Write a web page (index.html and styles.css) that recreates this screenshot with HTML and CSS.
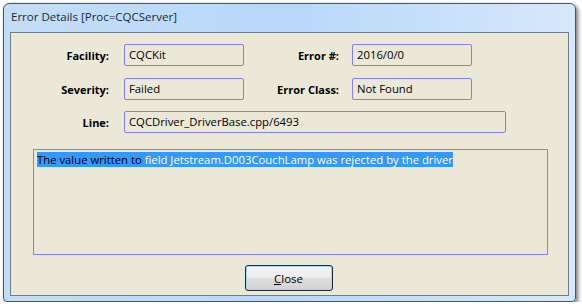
FILE: index.html
```html
<!DOCTYPE html>
<html>
<head>
<meta charset="utf-8">
<link rel="stylesheet" href="styles.css">
</head>
<body>
<div class="window">
  <div class="titlebar">Error Details [Proc=CQCServer]</div>
  <div class="client">
    <div class="row">
      <div class="label l1">Facility:</div>
      <div class="field f1">CQCKit</div>
      <div class="label l2">Error #:</div>
      <div class="field f1">2016/0/0</div>
    </div>
    <div class="row">
      <div class="label l1">Severity:</div>
      <div class="field f1">Failed</div>
      <div class="label l2">Error Class:</div>
      <div class="field f1">Not Found</div>
    </div>
    <div class="row">
      <div class="label l1">Line:</div>
      <div class="field fline">CQCDriver_DriverBase.cpp/6493</div>
    </div>
    <div class="message"><span class="sel"><span class="dark">The value written to </span>field Jetstream.D003CouchLamp was rejected by the driver</span></div>
    <div class="buttons">
      <button class="btn"><span class="u">C</span>lose</button>
    </div>
  </div>
</div>
</body>
</html>
```

FILE: styles.css
```css
html, body {
  margin: 0;
  padding: 0;
  background: #ffffff;
}
body {
  font-family: "Open Sans", "Noto Sans", sans-serif;
  font-size: 11px;
  color: #000;
}
.window {
  margin: 3px 0 0 3px;
  width: 573px;
  height: 299px;
  box-sizing: border-box;
  border: 1px solid #4d5660;
  border-radius: 6px 6px 4px 4px;
  background: linear-gradient(to right, #c3ddf6 0%, #b8d8fa 50%, #d6e8fb 100%);
  box-shadow: 2px 2px 4px rgba(0, 0, 0, 0.55);
  padding: 0 6px 5px 6px;
  display: flex;
  flex-direction: column;
}
.titlebar {
  height: 28px;
  line-height: 26px;
  padding-left: 1px;
  color: #1e2933;
  font-size: 11.5px;
  flex: none;
}
.client {
  flex: 1;
  border: 1px solid #6f7d8a;
  background: #ebe8d8;
  padding-top: 11px;
  display: flex;
  flex-direction: column;
}
.row {
  display: flex;
  align-items: flex-start;
  height: 22px;
  margin-bottom: 11px;
}
.row:first-child {
  margin-bottom: 12px;
}
.label {
  font-weight: bold;
  text-align: right;
  padding-top: 4px;
  line-height: 16px;
}
.l1 {
  width: 98px;
  margin-right: 15px;
}
.l2 {
  width: 95px;
  margin-right: 13px;
}
.field {
  box-sizing: border-box;
  height: 22px;
  border: 1px solid #7f7ff0;
  border-radius: 2px;
  padding: 0 4px;
  line-height: 19px;
  font-size: 11.3px;
  white-space: nowrap;
}
.f1 {
  width: 120px;
}
.fline {
  width: 382px;
}
.message {
  margin: 5px 0 0 22px;
  width: 515px;
  height: 106px;
  box-sizing: border-box;
  border: 1px solid #8080f0;
  padding: 3px 3px;
  line-height: 14px;
  font-size: 11.3px;
  flex: none;
}
.sel {
  background: #3399ff;
  color: #ffffff;
}
.dark {
  color: #000000;
}
.buttons {
  display: flex;
  justify-content: center;
  margin-top: 10px;
}
.btn {
  width: 88px;
  height: 26px;
  margin-right: 2px;
  font-family: inherit;
  font-size: 11.5px;
  color: #000;
  border: 1px solid #1f2a36;
  border-radius: 3px;
  background: linear-gradient(#f4f4f4 0%, #ececec 48%, #dedede 52%, #d2d2d2 100%);
  box-shadow: inset 0 0 0 1px #9fd8f8;
  padding: 0;
}
.u {
  text-decoration: underline;
}
```
